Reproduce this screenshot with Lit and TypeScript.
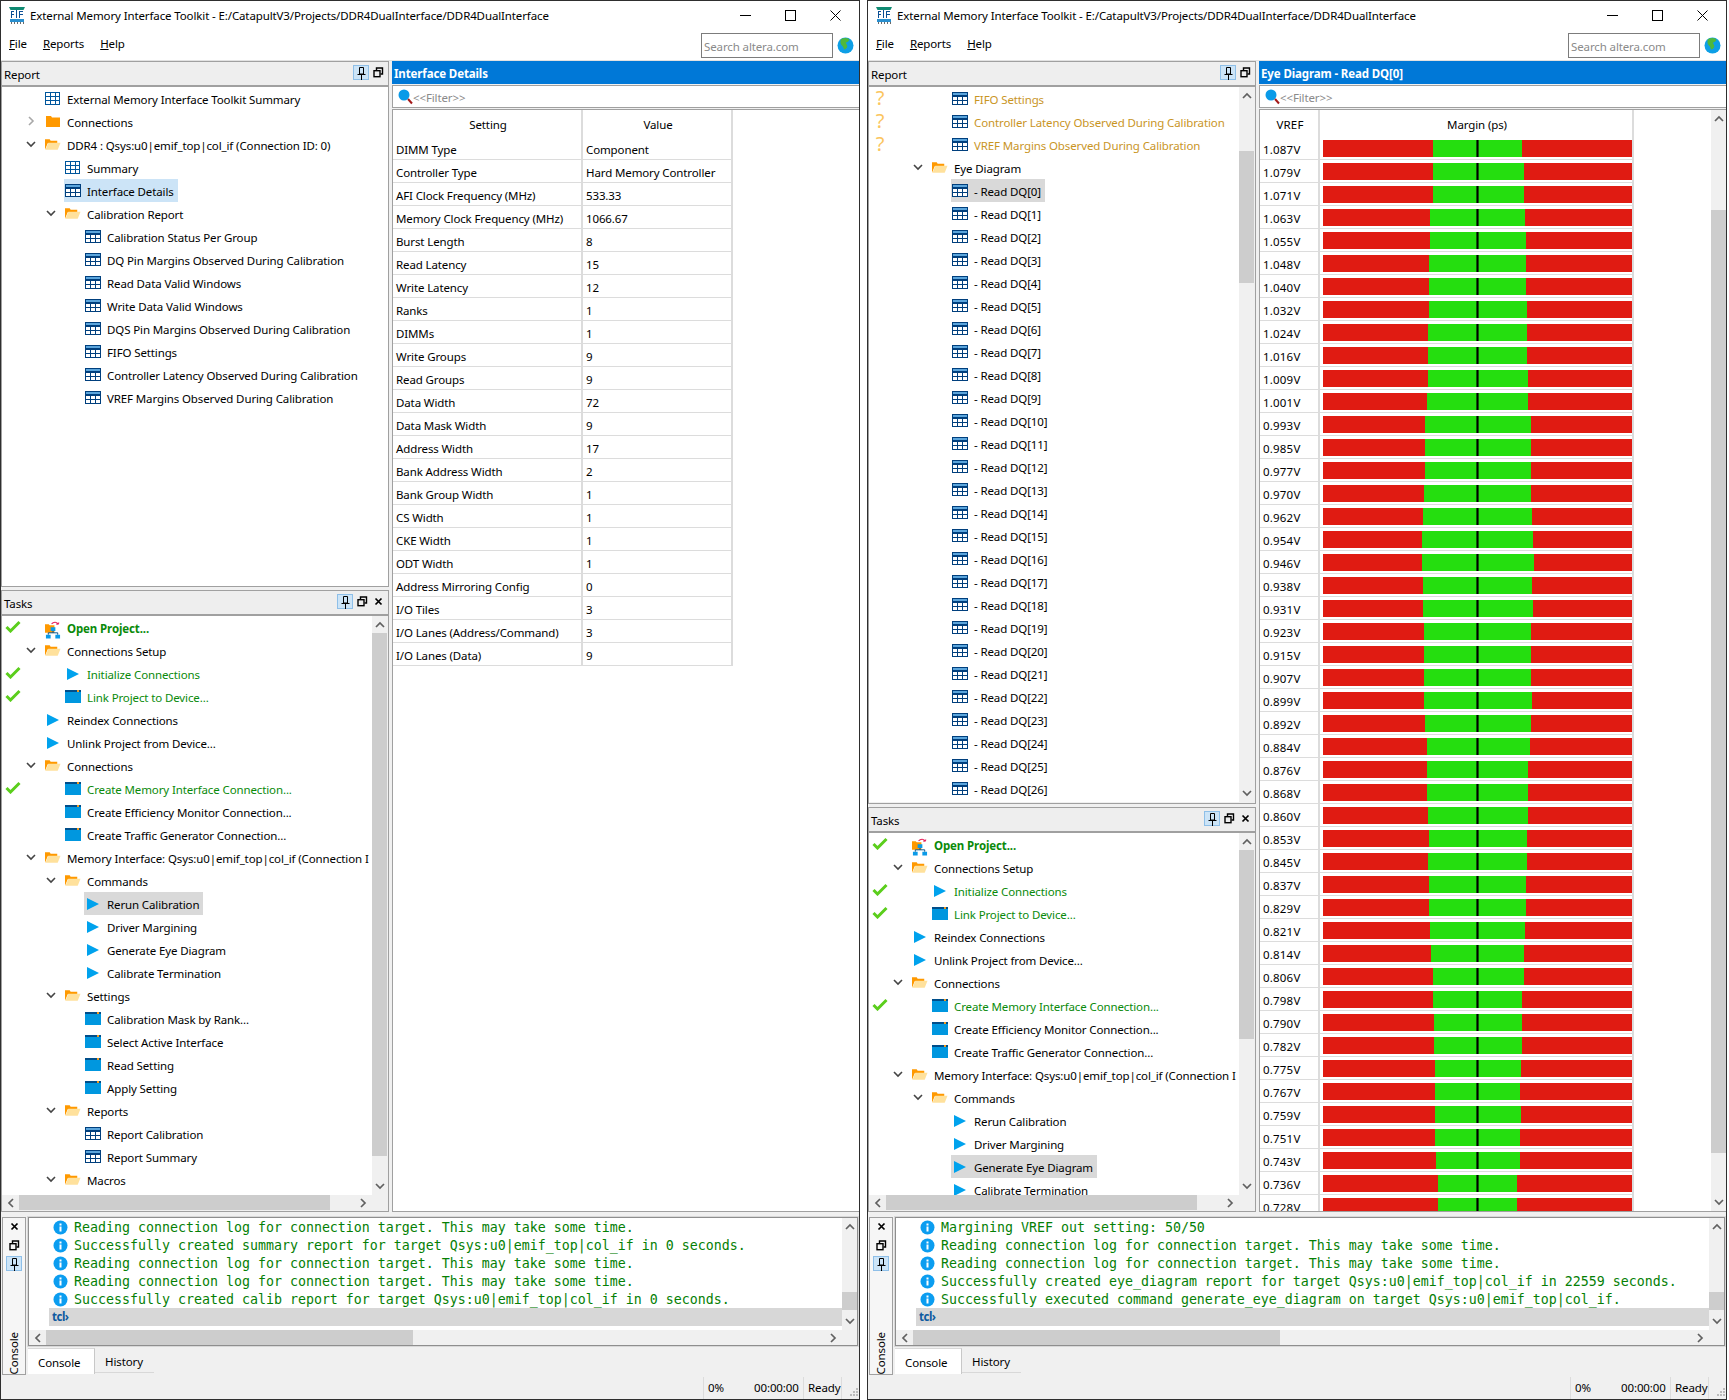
import { LitElement, html, css } from "lit";
import { customElement } from "lit/decorators.js";

type Row = { l: 0 | 1 | 2; c?: "d" | "r"; i: string; t: string; s?: "c" | "q"; k?: "g" | "a" | "b"; sel?: "b" | "g" };

const ICONS: Record<string, any> = {
  tp: html`<svg width="16" height="14" viewBox="0 0 16 14"><rect x=".5" y=".5" width="14" height="12" fill="#fff" stroke="#00569c"/><path d="M0 4.5h15M0 8.5h15M5.5 0v13M10.5 0v13" stroke="#00569c" fill="none"/></svg>`,
  t: html`<svg width="16" height="14" viewBox="0 0 16 14"><rect x=".5" y=".5" width="15" height="12" fill="#fff" stroke="#003f7d"/><rect x="1" y="1" width="14" height="2" fill="#5ba5dc"/><rect x="1" y="3" width="14" height="2" fill="#003f7d"/><path d="M0 8.500h16M5.500 5v8M10.500 5v8" stroke="#003f7d" fill="none"/></svg>`,
  f: html`<svg width="17" height="14" viewBox="0 0 17 14"><path d="M0 12V1h5l1 1.5h7V5H3z" fill="#ff9900"/><path d="M3.5 4.5H16.5L13.5 12H0.5z" fill="#ffe19c"/></svg>`,
  fc: html`<svg width="16" height="14" viewBox="0 0 16 14"><path d="M1 12V1h5l1 1.5h8V12z" fill="#ff9900"/></svg>`,
  p: html`<svg width="16" height="14" viewBox="0 0 16 14"><path d="M2 1l12 6-12 6z" fill="#00a2ed"/></svg>`,
  w: html`<svg width="16" height="14" viewBox="0 0 16 14"><rect y="0" width="16" height="13" fill="#0097df"/><rect y="0" width="16" height="2" fill="#004e8a"/><rect x="12" y="0" width="2" height="2" fill="#f29b1d"/></svg>`,
  o: html`<svg width="17" height="18" viewBox="0 0 17 18"><path d="M0 12V3h4l1 1h5v8z" fill="#ff9900"/><path d="M6 6h5v4H6zM1 14h5v4H1zM11 14h5v4h-5z" fill="#0a9ae8"/><path d="M8.5 10v2M3.5 14v-2h10v2" stroke="#004e8a" fill="none"/><path d="M7 2.5C9 0 13 0 14 3M14 3l-2.2-.4M14 3l.8-2" stroke="#e8205a" fill="none" stroke-width="1.1"/></svg>`,
};
const CHEV = {
  d: html`<svg width="10" height="7" viewBox="0 0 10 7"><path d="M1 1l4 4 4-4" stroke="#444" stroke-width="1.6" fill="none"/></svg>`,
  r: html`<svg width="7" height="10" viewBox="0 0 7 10"><path d="M1 1l4 4-4 4" stroke="#a8a8a8" stroke-width="1.6" fill="none"/></svg>`,
};
const CHECK = html`<svg width="16" height="13" viewBox="0 0 16 13"><path d="M1.5 7l4 4L14.5 2" stroke="#5bce1c" stroke-width="3" fill="none"/></svg>`;
const FLOAT = html`<svg width="11" height="11" viewBox="0 0 11 11"><path d="M3.5 3V1h6v6H7.5" fill="none" stroke="#000" stroke-width="1.4"/><rect x="1" y="3.7" width="6" height="6" fill="none" stroke="#000" stroke-width="1.4"/></svg>`;
const PIN = html`<svg width="11" height="14" viewBox="0 0 11 14"><path d="M3.5 1.500h4v6.500h-4zM1.500 8.500h8M5.500 9v5" fill="none" stroke="#000" stroke-width="1"/></svg>`;
const CLOSE = html`<svg width="9" height="9" viewBox="0 0 9 9"><path d="M1.5 1.5l6 6M7.5 1.5l-6 6" stroke="#000" stroke-width="1.7"/></svg>`;
const LOGO = html`<svg width="17" height="18" viewBox="0 0 17 18"><path d="M0 0h16l-1.500 3h-13z" fill="#0f8a72"/><path d="M2 4h3v1H3v2h2v1H3v3H2zM7 3h1v8H7zM10 4h4v1h-3v2h3v1h-3v3h-1z" fill="#0b4f95"/><rect x="1" y="12" width="14" height="3" fill="#2a8fcf"/><path d="M2 15h1v2H2zM5 15h1v2H5zM8 15h1v2H8zM11 15h1v2h-1zM14 15h1v2h-1z" fill="#6a6a6a"/></svg>`;
const GLOBE = html`<svg width="17" height="17" viewBox="0 0 17 17"><circle cx="8.5" cy="8.5" r="8" fill="#0d9fe6"/><path d="M4 2c3-1.500 6-1.500 8 0 1 1-1 3-3 3.500 0 2 2 2.500 1 5-1 1-2 2-3 2-.5-2-1-3-2.500-4.500C3.500 7 3 4 4 2z" fill="#4fb83c"/></svg>`;
const GLASS = html`<svg width="15" height="16" viewBox="0 0 15 16"><circle cx="6" cy="6" r="5.500" fill="#0a9ae8"/><path d="M10 10l4 4.500" stroke="#a41a1a" stroke-width="2"/></svg>`;
const INFO = html`<svg width="15" height="15" viewBox="0 0 15 15"><circle cx="7.500" cy="7.500" r="7" fill="#0b9df0"/><rect x="6.500" y="6.500" width="2" height="5" fill="#fff"/><rect x="6.500" y="3.500" width="2" height="2" fill="#fff"/></svg>`;
const ARR = {
  u: html`<svg width="10" height="7" viewBox="0 0 10 7"><path d="M1 6l4-4 4 4" stroke="#606060" stroke-width="1.700" fill="none"/></svg>`,
  d: html`<svg width="10" height="7" viewBox="0 0 10 7"><path d="M1 1l4 4 4-4" stroke="#606060" stroke-width="1.700" fill="none"/></svg>`,
  l: html`<svg width="7" height="10" viewBox="0 0 7 10"><path d="M6 1L2 5l4 4" stroke="#606060" stroke-width="1.700" fill="none"/></svg>`,
  r: html`<svg width="7" height="10" viewBox="0 0 7 10"><path d="M1 1l4 4-4 4" stroke="#606060" stroke-width="1.700" fill="none"/></svg>`,
};

const SETTINGS: [string, string][] = [
  ["DIMM Type", "Component"], ["Controller Type", "Hard Memory Controller"], ["AFI Clock Frequency (MHz)", "533.33"],
  ["Memory Clock Frequency (MHz)", "1066.67"], ["Burst Length", "8"], ["Read Latency", "15"], ["Write Latency", "12"],
  ["Ranks", "1"], ["DIMMs", "1"], ["Write Groups", "9"], ["Read Groups", "9"], ["Data Width", "72"], ["Data Mask Width", "9"],
  ["Address Width", "17"], ["Bank Address Width", "2"], ["Bank Group Width", "1"], ["CS Width", "1"], ["CKE Width", "1"],
  ["ODT Width", "1"], ["Address Mirroring Config", "0"], ["I/O Tiles", "3"], ["I/O Lanes (Address/Command)", "3"], ["I/O Lanes (Data)", "9"],
];

const VREF = "1.087 1.079 1.071 1.063 1.055 1.048 1.040 1.032 1.024 1.016 1.009 1.001 0.993 0.985 0.977 0.970 0.962 0.954 0.946 0.938 0.931 0.923 0.915 0.907 0.899 0.892 0.884 0.876 0.868 0.860 0.853 0.845 0.837 0.829 0.821 0.814 0.806 0.798 0.790 0.782 0.775 0.767 0.759 0.751 0.743 0.736 0.728".split(" ");
const EDGES = [[98,366],[98,371],[98,371],[91,374],[91,378],[88,378],[88,378],[88,381],[84,381],[84,381],[84,384],[81,384],[76,392],[76,392],[76,392],[73,392],[70,396],[66,399],[66,403],[70,396],[70,399],[73,392],[73,392],[73,392],[73,396],[76,392],[81,389],[81,384],[81,384],[84,384],[88,381],[84,381],[88,378],[88,378],[91,374],[94,371],[98,371],[98,366],[102,366],[102,366],[106,362],[106,359],[106,362],[106,359],[109,359],[113,352],[113,352]];

const REPORT1: Row[] = [
  { l: 0, i: "tp", t: "External Memory Interface Toolkit Summary" },
  { l: 0, c: "r", i: "fc", t: "Connections" },
  { l: 0, c: "d", i: "f", t: "DDR4 : Qsys:u0|emif_top|col_if (Connection ID: 0)" },
  { l: 1, i: "tp", t: "Summary" },
  { l: 1, i: "t", t: "Interface Details", sel: "b" },
  { l: 1, c: "d", i: "f", t: "Calibration Report" },
  ...["Calibration Status Per Group", "DQ Pin Margins Observed During Calibration", "Read Data Valid Windows", "Write Data Valid Windows", "DQS Pin Margins Observed During Calibration", "FIFO Settings", "Controller Latency Observed During Calibration", "VREF Margins Observed During Calibration"].map((t) => ({ l: 2 as const, i: "t", t })),
];
const REPORT2: Row[] = [
  ...["FIFO Settings", "Controller Latency Observed During Calibration", "VREF Margins Observed During Calibration"].map((t) => ({ l: 2 as const, i: "t", t, s: "q" as const, k: "a" as const })),
  { l: 1, c: "d", i: "f", t: "Eye Diagram" },
  ...Array.from({ length: 27 }, (_, n) => ({ l: 2 as const, i: "t", t: `- Read DQ[${n}]`, sel: n === 0 ? ("g" as const) : undefined })),
];
const tasks = (sel: string): Row[] => [
  { l: 0, i: "o", t: "Open Project...", s: "c", k: "b" },
  { l: 0, c: "d", i: "f", t: "Connections Setup" },
  { l: 1, i: "p", t: "Initialize Connections", s: "c", k: "g" },
  { l: 1, i: "w", t: "Link Project to Device...", s: "c", k: "g" },
  { l: 0, i: "p", t: "Reindex Connections" },
  { l: 0, i: "p", t: "Unlink Project from Device..." },
  { l: 0, c: "d", i: "f", t: "Connections" },
  { l: 1, i: "w", t: "Create Memory Interface Connection...", s: "c", k: "g" },
  { l: 1, i: "w", t: "Create Efficiency Monitor Connection..." },
  { l: 1, i: "w", t: "Create Traffic Generator Connection..." },
  { l: 0, c: "d", i: "f", t: "Memory Interface: Qsys:u0|emif_top|col_if (Connection I" },
  { l: 1, c: "d", i: "f", t: "Commands" },
  ...["Rerun Calibration", "Driver Margining", "Generate Eye Diagram", "Calibrate Termination"].map((t) => ({ l: 2 as const, i: "p", t, sel: t === sel ? ("g" as const) : undefined })),
  { l: 1, c: "d", i: "f", t: "Settings" },
  ...["Calibration Mask by Rank...", "Select Active Interface", "Read Setting", "Apply Setting"].map((t) => ({ l: 2 as const, i: "w", t })),
  { l: 1, c: "d", i: "f", t: "Reports" },
  ...["Report Calibration", "Report Summary"].map((t) => ({ l: 2 as const, i: "t", t })),
  { l: 1, c: "d", i: "f", t: "Macros" },
];

const LOG1 = [
  "Reading connection log for connection target. This may take some time.",
  "Successfully created summary report for target Qsys:u0|emif_top|col_if in 0 seconds.",
  "Reading connection log for connection target. This may take some time.",
  "Reading connection log for connection target. This may take some time.",
  "Successfully created calib report for target Qsys:u0|emif_top|col_if in 0 seconds.",
];
const LOG2 = [
  "Margining VREF out setting: 50/50",
  "Reading connection log for connection target. This may take some time.",
  "Reading connection log for connection target. This may take some time.",
  "Successfully created eye_diagram report for target Qsys:u0|emif_top|col_if in 22559 seconds.",
  "Successfully executed command generate_eye_diagram on target Qsys:u0|emif_top|col_if.",
];

const vbar = (off: number, h: number) => html`<div class="vbar">
  <div class="arr">${ARR.u}</div>
  <div class="track"><div class="thumb" style="margin-top:${off}px;height:${h}px"></div></div>
  <div class="arr">${ARR.d}</div>
</div>`;
const hbar = (off: number, w: number) => html`<div class="hbar">
  <div class="arr">${ARR.l}</div>
  <div class="htrack"><div class="thumb" style="margin-left:${off}px;width:${w}px"></div></div>
  <div class="arr">${ARR.r}</div>
</div>`;

const treeRow = (r: Row) => html`<div class="row">
  <div class="st ${r.s === "q" ? "q" : ""}">${r.s === "c" ? CHECK : r.s === "q" ? "?" : ""}</div>
  <div class="ind l${r.l}"></div>
  <div class="chev">${r.c ? CHEV[r.c] : ""}</div>
  <div class="lab ${r.sel ? "sel-" + r.sel : ""}">
    <div class="ic">${ICONS[r.i]}</div>
    <div class="tx ${r.k ?? ""}">${r.t}</div>
  </div>
</div>`;

const panelHead = (name: string, close: boolean) => html`<div class="phead">
  <span class="pname">${name}</span>
  <div class="pbtns">
    <div class="pin">${PIN}</div>
    <div class="btn">${FLOAT}</div>
    ${close ? html`<div class="btn">${CLOSE}</div>` : ""}
  </div>
</div>`;

@customElement("app-root")
export class AppRoot extends LitElement {
  static styles = css`
    :host { display: block; background: #fff; font-family: "Noto Sans", sans-serif; font-size: 11.5px; letter-spacing: -0.12px; color: #000; }
    * { box-sizing: border-box; }
    .page { display: flex; gap: 7px; height: 1400px; width: 1729px; overflow: hidden; }
    .win { width: 860px; height: 1400px; flex: none; border: 1px solid #2e2e2e; background: #f0f0f0; display: flex; flex-direction: column; }
    .title { height: 29px; background: #fff; display: flex; align-items: center; padding: 0 0 0 8px; flex: none; }
    .title .ttext { margin-left: 4px; flex: 1; white-space: nowrap; }
    .wc { display: flex; align-items: center; padding-right: 18px; gap: 34px; height: 20px; }
    .menu { height: 30px; background: #fff; display: flex; align-items: center; padding-left: 8px; flex: none; position: relative; }
    .mitems { display: flex; gap: 16px; padding-bottom: 3px; }
    .menu u { text-decoration-thickness: 1px; }
    .search { margin-left: auto; width: 132px; height: 25px; border: 1px solid #7c7c7c; color: #8a8a8a; padding: 4px 2px 2px; line-height: 17px; margin-top: 1px; }
    .globe { display: flex; margin: 1px 5px 0 4px; }
    .rule { height: 1px; background: #e2e2e2; flex: none; }
    .main { height: 1151px; flex: none; display: flex; gap: 3px; }
    .left { width: 388px; flex: none; display: flex; flex-direction: column; gap: 3px; }
    .panel { border: 1px solid #a0a0a0; background: #f0f0f0; display: flex; flex-direction: column; min-height: 0; }
    .report { flex: 1; }
    .t-tall { height: 622px; flex: none; }
    .t-short { height: 405px; flex: none; }
    .phead { height: 23px; background: #eee; flex: none; display: flex; padding-left: 2px; position: relative; }
    .pname { padding-top: 4px; line-height: 17px; }
    .pbtns { margin-left: auto; display: flex; align-items: flex-start; padding-top: 3px; padding-right: 3px; gap: 2px; }
    .pin { width: 16px; height: 15px; background: #cce4f7; border: 1px solid #8ebfe8; display: flex; align-items: center; justify-content: center; }
    .btn { width: 14px; height: 15px; display: flex; align-items: center; justify-content: center; }
    .psep { height: 2px; background: #a0a0a0; flex: none; }
    .pbody { flex: 1; min-height: 0; display: grid; grid-template-columns: minmax(0, 1fr) 15px; grid-template-rows: minmax(0, 1fr) 15px; padding: 0 1px 1px 0; background: #f0f0f0; }
    .pbody.nobars { grid-template-columns: minmax(0, 1fr); grid-template-rows: minmax(0, 1fr); padding: 0; }
    .pbody.vonly { grid-template-rows: minmax(0, 1fr); }
    .tree { background: #fff; overflow: hidden; min-width: 0; min-height: 0; }
    .corner { background: #f0f0f0; }
    .row { height: 23px; display: flex; align-items: stretch; white-space: nowrap; }
    .st { width: 22px; flex: none; display: flex; align-items: center; justify-content: center; padding-bottom: 2px; }
    .st.q { color: #fbc55e; font-size: 20px; font-weight: 400; line-height: 20px; }
    .ind { flex: none; }
    .l0 { width: 0; margin-left: -1px; }
    .l1 { width: 19px; }
    .l2 { width: 39px; }
    .chev { width: 23px; flex: none; display: flex; align-items: center; justify-content: center; padding-right: 7px; padding-bottom: 1px; }
    .lab { display: flex; align-items: center; padding: 0 4px 0 1px; margin-left: -2px; }
    .ic { width: 16px; height: 14px; flex: none; display: flex; align-items: flex-start; }
    .tx { margin-left: 6px; line-height: 23px; padding-top: 2px; }
    .g { color: #0a8a0a; }
    .a { color: #c9951f; }
    .b { color: #0a8a0a; font-weight: 700; }
    .sel-b { background: #cce4f7; }
    .sel-g { background: #d9d9d9; }
    .vbar { display: flex; flex-direction: column; background: #f0f0f0; min-height: 0; }
    .hbar { display: flex; background: #f0f0f0; height: 15px; }
    .arr { flex: none; width: 17px; height: 17px; display: flex; align-items: center; justify-content: center; }
    .vbar .arr { width: 15px; }
    .hbar .arr { height: 15px; }
    .track { flex: 1; min-height: 0; overflow: hidden; }
    .htrack { flex: 1; min-width: 0; overflow: hidden; }
    .thumb { background: #cdcdcd; }
    .vbar .thumb { width: 15px; }
    .hbar .thumb { height: 15px; }
    .right { flex: 1; min-width: 0; display: flex; flex-direction: column; }
    .bluehead { height: 23px; background: #0078d7; color: #fff; font-weight: 700; padding-left: 2px; line-height: 25px; flex: none; }
    .filter { height: 23px; margin-top: 1px; border: 1px solid #a0a0a0; border-width: 1px 0 1px 1px; background: #fff; display: flex; align-items: center; padding-left: 5px; color: #8a8a8a; flex: none; }
    .filter span { padding-top: 1px; }
    .tframe { flex: 1; min-height: 0; margin-top: 1px; border: 1px solid #a0a0a0; border-width: 1px 0 1px 1px; background: #fff; display: grid; grid-template-columns: minmax(0, 1fr) 15px; }
    .tframe.plain { grid-template-columns: minmax(0, 1fr); }
    .tarea { overflow: hidden; min-height: 0; }
    .trow { display: flex; height: 23px; width: fit-content; border-bottom: 1px solid #dcdcdc; }
    .trow.hd { height: 27px; border-bottom: none; }
    .cell { border-right: 2px solid #dcdcdc; padding-left: 3px; line-height: 24px; padding-top: 1px; white-space: nowrap; flex: none; }
    .hd .cell { text-align: center; padding: 2px 0 0 2px; line-height: 26px; }
    .c1 { width: 190px; }
    .c2 { width: 150px; }
    .cv { width: 60px; letter-spacing: 0.2px; }
    .cm { width: 314px; padding: 3px 0 0 3px; }
    .bar { display: flex; height: 17px; width: 309px; position: relative; background: #e01b12; }
    .gr { background: #25de0f; height: 17px; }
    .mark { position: absolute; left: 153px; top: 0; width: 3px; height: 17px; background: #000; border-left: 1px solid #0e5a08; border-right: 1px solid #0e5a08; }
    .bottom { height: 159px; margin-top: 4px; flex: none; display: flex; }
    .dock { width: 24px; margin: 1px 0 0 1px; border: 1px solid #a0a0a0; background: #f6f6f6; display: flex; flex-direction: column; align-items: center; gap: 2px; height: 158px; flex: none; }
    .dock .btn { height: 17px; }
    .dname { margin-top: auto; writing-mode: vertical-rl; transform: rotate(180deg); line-height: 20px; }
    .cside { width: 830px; margin-left: 2px; flex: none; }
    .cframe { height: 129px; margin-top: 1px; border: 1px solid #8e8e8e; background: #fff; display: grid; grid-template-columns: minmax(0, 1fr) 15px; grid-template-rows: minmax(0, 1fr) 15px; outline: 1px solid #d8d8d8; outline-offset: 0; }
    .clog { overflow: hidden; min-width: 0; display: flex; flex-direction: column; }
    .cline { height: 18px; display: flex; align-items: center; padding-left: 24px; flex: none; white-space: nowrap; letter-spacing: 0; }
    .cline .m { margin-left: 6px; font-family: "DejaVu Sans Mono", monospace; font-size: 13.29px; color: #058005; line-height: 18px; padding-top: 2px; }
    .cline svg { flex: none; }
    .tcl { height: 18px; margin-left: 20px; background: #d7d7d7; color: #0d5aa0; font-weight: 700; padding-left: 3px; line-height: 18px; flex: none; letter-spacing: -0.5px; }
    .tabs { display: flex; height: 27px; margin-top: 2px; }
    .tab { background: #fff; width: 67px; padding-left: 10px; line-height: 28px; border-top: 1px solid #d8d8d8; border-right: 1px solid #c8c8c8; height: 26px; }
    .tab2 { width: 59px; padding-left: 10px; line-height: 26px; height: 24px; border-bottom: 1px solid #d8d8d8; margin-top: 1px; }
    .status { height: 22px; margin-top: 2px; flex: none; display: flex; justify-content: flex-end; }
    .sc { border-left: 1px solid #dcdcdc; padding-left: 4px; line-height: 22px; display: flex; }
    .s1 { width: 100px; }
    .s1 span { width: 46px; }
    .s2 { width: 38px; }
    .s3 { width: 18px; border-left: 1px solid #dcdcdc; display: flex; align-items: flex-end; justify-content: flex-end; }
  `;

  private tree(rows: Row[]) {
    return html`<div class="tree">${rows.map(treeRow)}</div>`;
  }

  private win(opts: {
    report: any; tasksRows: Row[]; tasksCls: string; tvbar: any; head: string; tarea: any; tvs: any; log: string[];
  }) {
    return html`<div class="win">
      <div class="title">
        ${LOGO}
        <span class="ttext">External Memory Interface Toolkit - E:/CatapultV3/Projects/DDR4DualInterface/DDR4DualInterface</span>
        <div class="wc">
          <svg width="11" height="2"><rect width="11" height="1" fill="#000"/></svg>
          <svg width="11" height="11"><rect x=".5" y=".5" width="10" height="10" fill="none" stroke="#000"/></svg>
          <svg width="11" height="11"><path d="M.5 .5l10 10M10.500 .5l-10 10" stroke="#000" fill="none"/></svg>
        </div>
      </div>
      <div class="menu">
        <div class="mitems"><span><u>F</u>ile</span><span><u>R</u>eports</span><span><u>H</u>elp</span></div>
        <div class="search">Search altera.com</div>
        <div class="globe">${GLOBE}</div>
      </div>
      <div class="rule"></div>
      <div class="main">
        <div class="left">
          <div class="panel report">
            ${panelHead("Report", false)}
            <div class="psep"></div>
            ${opts.report}
          </div>
          <div class="panel ${opts.tasksCls}">
            ${panelHead("Tasks", true)}
            <div class="psep"></div>
            <div class="pbody">
              ${this.tree(opts.tasksRows)}
              ${opts.tvbar}
              ${hbar(0, 311)}
              <div class="corner"></div>
            </div>
          </div>
        </div>
        <div class="right">
          <div class="bluehead">${opts.head}</div>
          <div class="filter">${GLASS}<span>&lt;&lt;Filter&gt;&gt;</span></div>
          <div class="tframe ${opts.tvs ? "" : "plain"}">
            <div class="tarea">${opts.tarea}</div>
            ${opts.tvs ?? ""}
          </div>
        </div>
      </div>
      <div class="bottom">
        <div class="dock">
          <div class="btn">${CLOSE}</div>
          <div class="btn">${FLOAT}</div>
          <div class="pin">${PIN}</div>
          <div class="dname">Console</div>
        </div>
        <div class="cside">
          <div class="cframe">
            <div class="clog">
              ${opts.log.map((m) => html`<div class="cline">${INFO}<span class="m">${m}</span></div>`)}
              <div class="tcl">tcl›</div>
            </div>
            ${vbar(57, 18)}
            ${hbar(0, 367)}
            <div class="corner"></div>
          </div>
          <div class="tabs">
            <div class="tab">Console</div>
            <div class="tab2">History</div>
          </div>
        </div>
      </div>
      <div class="status">
        <div class="sc s1"><span>0%</span>00:00:00</div>
        <div class="sc s2">Ready</div>
        <div class="s3"><svg width="12" height="12" viewBox="0 0 12 12"><path d="M9 1h2v2H9zM6 4h2v2H6zM9 4h2v2H9zM3 7h2v2H3zM6 7h2v2H6zM9 7h2v2H9z" fill="#bcbcbc"/></svg></div>
      </div>
    </div>`;
  }

  render() {
    const t1 = html`
      <div class="trow hd"><div class="cell c1">Setting</div><div class="cell c2">Value</div></div>
      ${SETTINGS.map(([a, b]) => html`<div class="trow"><div class="cell c1">${a}</div><div class="cell c2">${b}</div></div>`)}`;
    const t2 = html`
      <div class="trow hd"><div class="cell cv">VREF</div><div class="cell cm">Margin (ps)</div></div>
      ${VREF.map((v, i) => {
        const [a, b] = EDGES[i];
        const s = 1400 + a / 3 - 1323;
        const w = (b - a) / 3;
        return html`<div class="trow"><div class="cell cv">${v}V</div><div class="cell cm"><div class="bar"><div class="gr" style="margin-left:${s.toFixed(1)}px;width:${w.toFixed(1)}px"></div><div class="mark"></div></div></div></div>`;
      })}`;
    return html`<div class="page">
      ${this.win({
        report: html`<div class="pbody nobars">${this.tree(REPORT1)}</div>`,
        tasksRows: tasks("Rerun Calibration"),
        tasksCls: "t-tall",
        tvbar: vbar(0, 523),
        head: "Interface Details",
        tarea: t1,
        tvs: null,
        log: LOG1,
      })}
      ${this.win({
        report: html`<div class="pbody vonly">${this.tree(REPORT2)}${vbar(47, 132)}</div>`,
        tasksRows: tasks("Generate Eye Diagram").slice(0, 16),
        tasksCls: "t-short",
        tvbar: vbar(0, 189),
        head: "Eye Diagram - Read DQ[0]",
        tarea: t2,
        tvs: vbar(83, 943),
        log: LOG2,
      })}
    </div>`;
  }
}
